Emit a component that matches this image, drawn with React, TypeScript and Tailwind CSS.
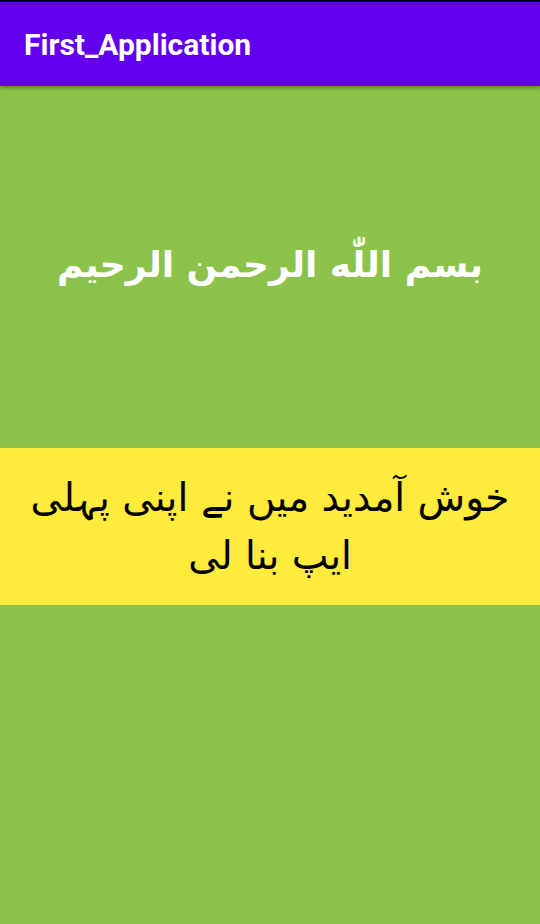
export default function App() {
  return (
    <div className="flex h-[924px] w-[540px] flex-col bg-[#8bc34a]">
      <div className="h-[2px] bg-black" />
      <header className="relative z-10 flex h-[84px] items-center bg-[#6200ee] px-6 shadow-[0_2px_4px_rgba(0,0,0,0.35)]">
        <h1 className="font-['Roboto',sans-serif] text-[30px] font-bold text-white">First_Application</h1>
      </header>
      <div className="flex h-[362px] items-center justify-center pb-[4px]">
        <p dir="rtl" className="font-['DejaVu_Sans',sans-serif] text-[36px] font-bold text-white">
          بسم اللّٰه الرحمن الرحيم
        </p>
      </div>
      <div className="flex h-[157px] items-center justify-center bg-[#ffeb3b] px-6">
        <p dir="rtl" className="text-center font-['DejaVu_Sans',sans-serif] text-[39px] leading-[58px] text-black">
          خوش آمدید میں نے اپنی پہلی ایپ بنا لی
        </p>
      </div>
    </div>
  );
}
